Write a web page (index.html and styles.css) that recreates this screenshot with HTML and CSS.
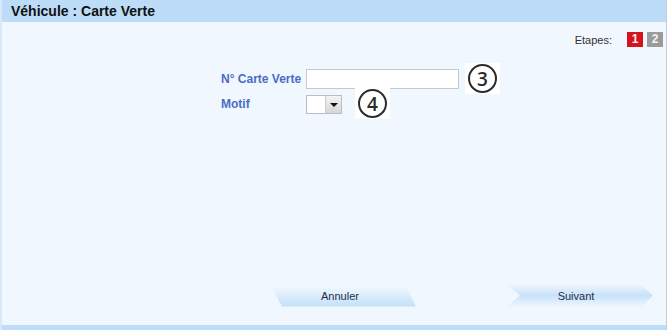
FILE: index.html
```html
<!DOCTYPE html>
<html lang="fr">
<head>
  <meta charset="UTF-8" />
  <title>Véhicule : Carte Verte</title>
  <link rel="stylesheet" href="styles.css">
</head>
<body>

  <div class="window">
    <div class="title-bar">Véhicule : Carte Verte</div>

    <div class="content">
      <div class="steps">
        <span class="steps-label">Etapes:</span>
        <span class="step active">1</span>
        <span class="step">2</span>
      </div>

      <div class="form">
        <div class="form-row">
          <label for="carte">N° Carte Verte</label>
          <input type="text" id="carte">
          <span class="marker marker-3"><span>3</span></span>
        </div>
        <div class="form-row">
          <label>Motif</label>
          <div class="select">
            <span class="select-value"></span>
            <span class="select-arrow"></span>
          </div>
          <span class="marker marker-4"><span>4</span></span>
        </div>
      </div>

      <div class="actions">
        <button class="btn btn-cancel">Annuler</button>
        <button class="btn btn-next">Suivant</button>
      </div>
    </div>

    <div class="footer-bar"></div>
  </div>

</body>
</html>
```

FILE: styles.css
```css
* {
  margin: 0;
  padding: 0;
  box-sizing: border-box;
  font-family: "Liberation Sans", Arial, sans-serif;
}

body {
  width: 670px;
  height: 330px;
  background: #ffffff;
  overflow: hidden;
}

.window {
  width: 667px;
  height: 330px;
  display: flex;
  flex-direction: column;
  background: #f0f7ff;
  border-left: 2px solid #d8e8f8;
  border-right: 1px solid #c6cbd3;
}

.title-bar {
  height: 22px;
  line-height: 22px;
  padding-left: 9px;
  background: #bcdcf8;
  color: #111;
  font-size: 14px;
  font-weight: bold;
}

.content {
  flex: 1;
  display: flex;
  flex-direction: column;
}

.steps {
  display: flex;
  justify-content: flex-end;
  align-items: center;
  gap: 4px;
  margin-top: 10px;
  padding-right: 3px;
}

.steps-label {
  font-size: 11px;
  color: #333;
  margin-right: 11px;
}

.step {
  width: 16px;
  height: 15px;
  line-height: 15px;
  text-align: center;
  background: #9b9b9b;
  color: #f2f2f2;
  font-size: 12px;
  font-weight: bold;
}

.step.active {
  background: #d6121d;
}

.form {
  margin-top: 22px;
  margin-left: 219px;
  display: flex;
  flex-direction: column;
  gap: 5px;
}

.form-row {
  display: flex;
  align-items: center;
}

.form-row label {
  width: 85px;
  font-size: 12px;
  font-weight: bold;
  color: #4a6cc8;
}

.form-row input {
  width: 153px;
  height: 20px;
  border: 1px solid #c4c8cf;
  background: #fff;
}

.select {
  display: flex;
  width: 36px;
  height: 19px;
  border: 1px solid #b9bdc4;
  background: #fff;
}

.select-value {
  flex: 1;
}

.select-arrow {
  width: 16px;
  position: relative;
  border-left: 1px solid #c9ccd2;
  background: linear-gradient(#f4f4f4, #d6d6d6);
}

.select-arrow::after {
  content: "";
  position: absolute;
  left: 4px;
  top: 7px;
  border-left: 4px solid transparent;
  border-right: 4px solid transparent;
  border-top: 4px solid #111;
}

.marker {
  display: flex;
  align-items: center;
  justify-content: center;
  width: 35px;
  height: 31px;
  margin: -6px 0 -5px;
  background: #fff;
}

.marker span {
  width: 29px;
  height: 29px;
  border: 2.5px solid #2b2b2b;
  border-radius: 50%;
  display: flex;
  align-items: center;
  justify-content: center;
  font-family: "Open Sans", sans-serif;
  font-size: 19px;
  font-weight: 600;
  color: #2b2b2b;
}

.marker-3 {
  margin-left: 6px;
}

.marker-4 {
  margin-left: 13px;
}

.actions {
  margin-top: auto;
  padding: 0 0 17px 268px;
  display: flex;
  align-items: center;
}

.btn {
  border: none;
  font-size: 11px;
  color: #1f2d4a;
  cursor: pointer;
}

.btn-cancel {
  width: 146px;
  height: 22px;
  padding-right: 6px;
  clip-path: polygon(0 0, 135px 0, 146px 100%, 12px 100%);
  background: linear-gradient(#f3f9ff, #c3e0f8);
}

.btn-next {
  width: 148px;
  height: 25px;
  margin-left: 89px;
  padding-right: 6px;
  clip-path: polygon(0 0, 135px 0, 148px 50%, 135px 100%, 0 100%, 15px 50%);
  background: linear-gradient(#f3f9ff, #c8e2f8 50%, #f3f9ff);
}

.footer-bar {
  height: 5px;
  background: #bcdcf8;
}
```
